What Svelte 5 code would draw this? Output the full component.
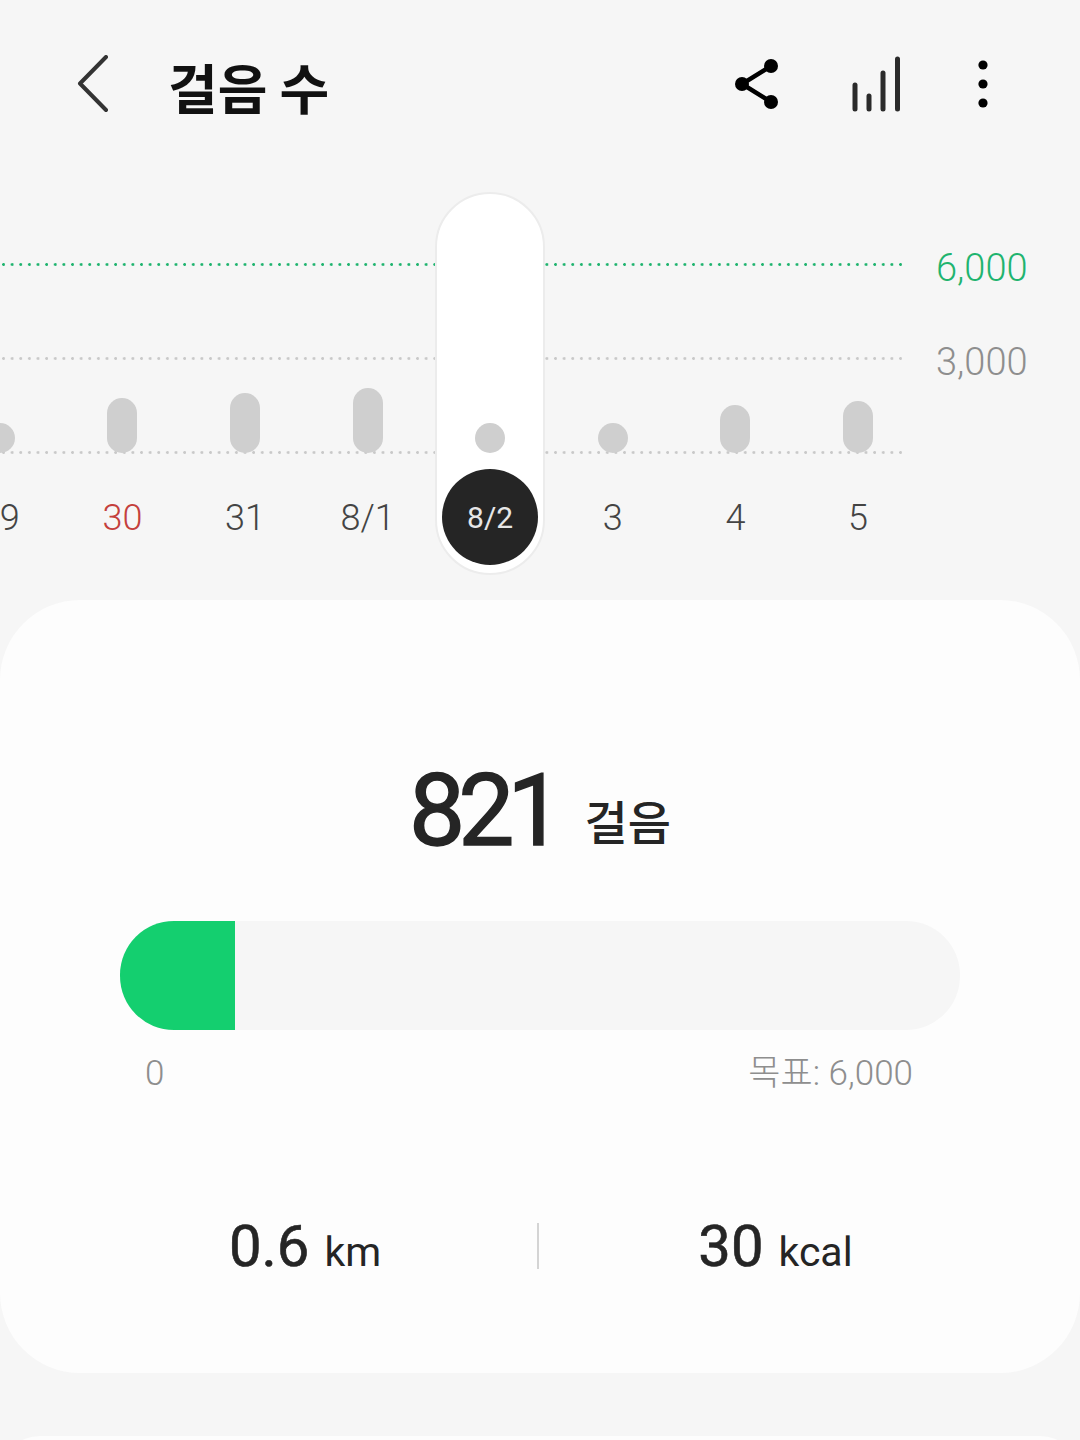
<script lang="ts">
  const goal = 6000;
  const steps = 821;

  // bar height is in px, 30 = dot
  const days = [
    { label: "29", height: 30 },
    { label: "30", height: 55, sunday: true },
    { label: "31", height: 60 },
    { label: "8/1", height: 65 },
    { label: "8/2", height: 30, selected: true },
    { label: "3", height: 30 },
    { label: "4", height: 48 },
    { label: "5", height: 52 }
  ];

  const lines = [
    { top: 95, label: "6,000", tone: "goal" },
    { top: 189, label: "3,000", tone: "mid" },
    { top: 283, label: "", tone: "base" }
  ];

  const progress = (steps / goal) * 100;
</script>

<div class="page">
  <header class="topbar">
    <button class="icon back" aria-label="뒤로">
      <svg width="32" height="58" viewBox="0 0 32 58">
        <path d="M29 2 L3 28.500 L29 55" fill="none" stroke="#333" stroke-width="4" stroke-linecap="round" stroke-linejoin="round" />
      </svg>
    </button>
    <h1>걸음 수</h1>
    <div class="actions">
      <svg width="44" height="50" viewBox="0 0 44 50">
        <path d="M36 7 L7 25 L36 43" fill="none" stroke="#000" stroke-width="4.500" />
        <circle cx="36" cy="7" r="7" />
        <circle cx="7" cy="25" r="7" />
        <circle cx="36" cy="43" r="7" />
      </svg>
      <svg width="50" height="56" viewBox="0 0 50 56">
        <g stroke="#2a2a2a" stroke-width="5" stroke-linecap="round">
          <path d="M4 29 V53" />
          <path d="M18 40 V53" />
          <path d="M32 17 V53" />
          <path d="M46.500 3 V53" />
        </g>
      </svg>
      <svg class="more" width="10" height="48" viewBox="0 0 10 48">
        <circle cx="5" cy="5" r="4.600" />
        <circle cx="5" cy="24" r="4.600" />
        <circle cx="5" cy="43" r="4.600" />
      </svg>
    </div>
  </header>

  <section class="chart">
    {#each lines as line}
      <div class="gridline {line.tone}" style="top: {line.top}px">
        <span class="dots"></span>
        {#if line.label}<span class="axis">{line.label}</span>{/if}
      </div>
    {/each}

    <div class="days">
      {#each days as day}
        <div class="day" class:selected={day.selected}>
          <div class="plot">
            <span class="bar" style="height: {day.height}px"></span>
          </div>
          <span class="date" class:sunday={day.sunday}>{day.label}</span>
        </div>
      {/each}
    </div>
  </section>

  <section class="card">
    <div class="total">
      <span class="count">821</span>
      <span class="unit">걸음</span>
    </div>

    <div class="track">
      <div class="fill" style="width: {progress}%"></div>
    </div>
    <div class="scale">
      <span>0</span>
      <span>목표: 6,000</span>
    </div>

    <div class="stats">
      <div class="stat"><b>0.6</b> <small>km</small></div>
      <div class="stat"><b>30</b> <small>kcal</small></div>
    </div>
  </section>

  <section class="card next"></section>
</div>

<style>
  :global(body) {
    margin: 0;
    background: #f6f6f6;
  }

  .page {
    height: 1440px;
    overflow: hidden;
    background: #f6f6f6;
    font-family: Roboto, "Noto Sans CJK KR", sans-serif;
    color: #252525;
  }

  .topbar {
    height: 168px;
    display: flex;
    align-items: center;
    padding: 0 92px 0 77px;
    box-sizing: border-box;
  }

  .icon {
    display: flex;
    padding: 0;
    border: none;
    background: none;
  }

  h1 {
    margin: 5px 0 0 59px;
    font-family: "Noto Sans CJK KR", sans-serif;
    font-size: 54px;
    font-weight: 700;
    line-height: 1;
    color: #111;
  }

  .actions {
    margin-left: auto;
    display: flex;
    align-items: center;
    gap: 72px;
  }

  .more {
    margin-left: 5px;
  }

  .chart {
    position: relative;
    height: 432px;
  }

  .gridline {
    position: absolute;
    left: 0;
    height: 3px;
    display: flex;
    align-items: center;
  }

  .dots {
    width: 904px;
    height: 3px;
    background-image: radial-gradient(circle at 1.5px 1.5px, currentColor 1.2px, transparent 1.6px);
    background-size: 8.63px 3px;
    background-position: 2px 0;
  }

  .goal {
    color: #1fb46f;
  }

  .mid,
  .base {
    color: #c9c9c9;
  }

  .axis {
    margin-left: 32px;
    font-size: 38px;
    font-weight: 300;
    line-height: 1;
    transform: translateY(3px);
  }

  .mid .axis {
    color: #8e8e8e;
  }

  .days {
    position: relative;
    display: grid;
    grid-template-columns: repeat(8, 122.6px);
    margin-left: -61.5px;
  }

  .day {
    position: relative;
    display: flex;
    flex-direction: column;
    align-items: center;
  }

  .day.selected::before {
    content: "";
    position: absolute;
    top: 24px;
    left: 6px;
    width: 110px;
    height: 383px;
    box-sizing: border-box;
    border: 2px solid #ececec;
    border-radius: 55px;
    background: #fff;
  }

  .plot {
    position: relative;
    height: 285px;
    display: flex;
    align-items: flex-end;
  }

  .bar {
    width: 30px;
    border-radius: 15px;
    background: #cfcfcf;
  }

  .date {
    position: relative;
    height: 96px;
    margin-top: 16px;
    width: 96px;
    border-radius: 50%;
    display: flex;
    align-items: center;
    justify-content: center;
    padding-top: 1px;
    box-sizing: border-box;
    font-size: 36px;
    font-weight: 300;
    color: #444;
  }

  .sunday {
    color: #c4403c;
  }

  .selected .date {
    background: #252525;
    color: #e6e6e6;
    font-size: 30px;
    font-weight: 400;
  }

  .card {
    height: 773px;
    box-sizing: border-box;
    border-radius: 80px;
    background: #fdfdfd;
    padding-top: 157px;
  }

  .next {
    margin-top: 63px;
    border-radius: 40px;
  }

  .total {
    display: flex;
    justify-content: center;
    align-items: baseline;
    gap: 28px;
    height: 107px;
    line-height: 107px;
  }

  .count {
    font-size: 100px;
    font-weight: 400;
    letter-spacing: -7px;
    -webkit-text-stroke: 1.5px #252525;
  }

  .unit {
    font-family: "Noto Sans CJK KR", sans-serif;
    font-size: 47px;
    font-weight: 500;
    transform: translateY(-5px);
  }

  .track {
    height: 109px;
    margin: 57px 120px 0;
    border-radius: 54px;
    background: #f6f6f6;
    overflow: hidden;
  }

  .fill {
    height: 100%;
    background: #14cf6f;
  }

  .scale {
    display: flex;
    justify-content: space-between;
    margin: 22px 167px 0 145px;
    font-size: 35px;
    font-weight: 300;
    line-height: 44px;
    color: #8e8e8e;
  }

  .stats {
    display: grid;
    grid-template-columns: 469px 475px;
    margin: 127px 0 0 68px;
  }

  .stat {
    height: 46px;
    display: flex;
    align-items: baseline;
    justify-content: center;
    gap: 15px;
    line-height: 46px;
  }

  .stat:first-child {
    padding-left: 5px;
  }

  .stat + .stat {
    border-left: 2px solid #d4d4d4;
  }

  .stat b {
    font-size: 58px;
    font-weight: 400;
    -webkit-text-stroke: 0.6px #252525;
  }

  .stat small {
    font-size: 41px;
  }
</style>
